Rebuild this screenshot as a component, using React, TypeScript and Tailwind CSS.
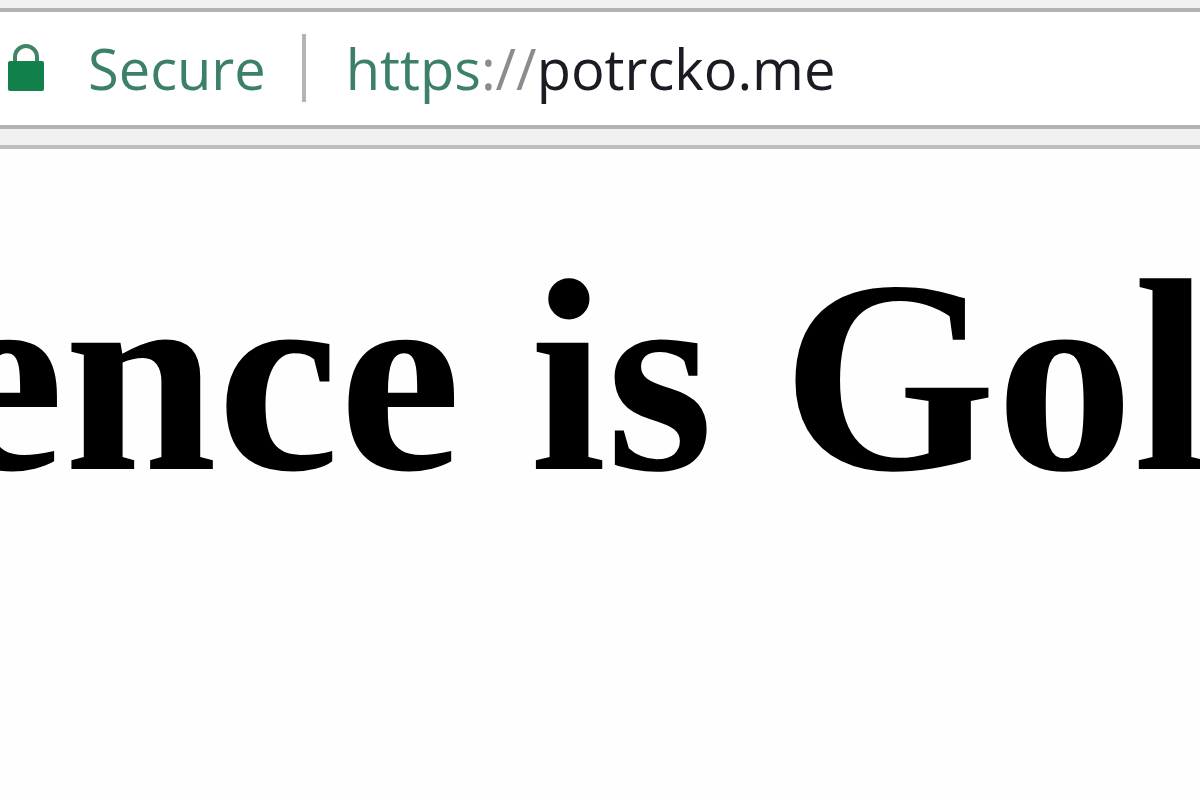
export default function App() {
  return (
    <div className="min-h-screen overflow-hidden bg-[#fefefe]">
      <header className="border-b-4 border-[#bdbdbd] bg-[#f1f1f1] pt-2 pb-4">
        <div className="flex h-[121px] items-center border-y-4 border-[#b2b2b2] bg-white pb-0.5 pl-2 font-['Open_Sans',sans-serif] text-[56px] leading-none">
          <svg className="h-12 w-9 shrink-0" viewBox="0 0 36 48" aria-hidden="true">
            <path d="M7 20V13a11 11 0 0 1 22 0v7" fill="none" stroke="#3f8565" strokeWidth="4" />
            <rect x="0" y="17" width="36" height="30" rx="2" fill="#12804a" />
          </svg>
          <span className="ml-11 text-[#3d806a]">Secure</span>
          <span className="mr-10 ml-9 h-[68px] w-1 bg-[#b4b4b4]" />
          <a href="https://potrcko.me" className="whitespace-nowrap text-[#1c1a22]">
            <span className="text-[#3d806a]">https</span>
            <span className="text-[#8f8a8e]">://</span>potrcko.me
          </a>
        </div>
      </header>
      <main className="pt-[67px]">
        <h1 className="-ml-[58px] whitespace-nowrap font-['Liberation_Serif',serif] text-[275px] leading-[320px] font-bold text-black">
          ence is Gol
        </h1>
      </main>
    </div>
  );
}
